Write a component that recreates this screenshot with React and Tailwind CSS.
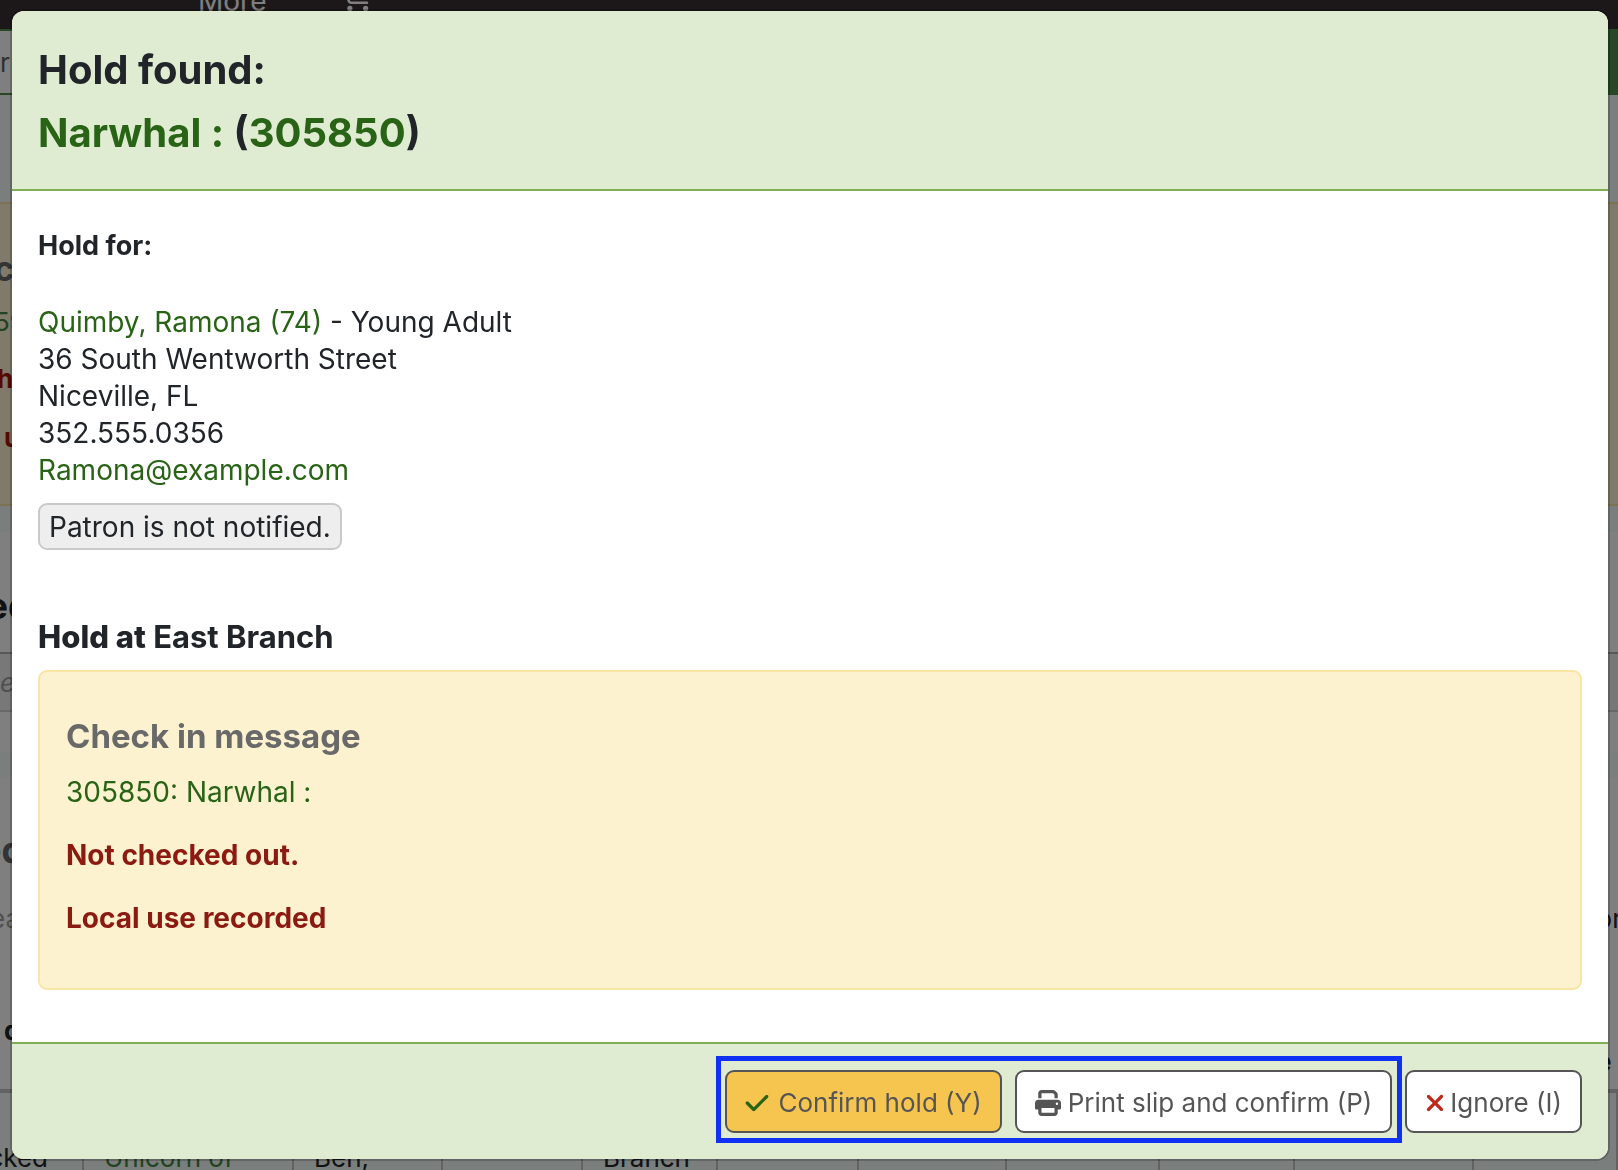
import { FaCartShopping, FaCheck, FaPrint, FaXmark } from 'react-icons/fa6'

const patron = {
  name: 'Quimby, Ramona (74)',
  category: 'Young Adult',
  lines: ['36 South Wentworth Street', 'Niceville, FL', '352.555.0356'],
  email: 'Ramona@example.com',
}

const columns = [
  { width: 83, head: 'd', cell: 'cked' },
  { width: 210, cell: 'Unicorn of', link: true },
  { width: 149, cell: 'Ben,' },
  { width: 140 },
  { width: 135, cell: 'Branch' },
  { width: 141 },
  { width: 148 },
  { width: 153 },
  { width: 135 },
  { width: 179 },
  { tail: 'e' },
]

// The check-in page that stays visible around the dialog
function CheckinPage() {
  return (
    <div className="flex h-screen flex-col overflow-hidden bg-[#f4fcf8] text-[26px] leading-[37px] text-[#202428]">
      <nav className="flex h-[29px] shrink-0 items-end overflow-hidden bg-[#383034] pl-[198px] text-white">
        <span className="w-[142px] pb-[14px] text-[28px] leading-[28px]">More</span>
        <FaCartShopping className="mb-[18px] h-[28px] w-[32px] shrink-0" />
      </nav>

      <div className="flex h-[66px] shrink-0 bg-[#528e4c]">
        <input
          aria-label="Check in barcode"
          defaultValue="r"
          className="w-3/4 border-y-2 border-[#528e4c] bg-white text-[#606060] outline-none"
        />
      </div>

      <div className="mt-[107px] h-[304px] shrink-0 border-y-2 border-[#fbe5a5] bg-[#fff4d2] pt-[45px]">
        <p className="-ml-[6px] text-[34px] font-bold leading-[40px] text-[#696969]">c</p>
        <p className="mt-[14px] -ml-[6px] text-[#418940]">59</p>
        <p className="mt-[20px] -ml-[3px] font-bold text-[#b01005]">h</p>
        <p className="mt-[22px] pl-[4px] font-bold text-[#b01005]">u</p>
      </div>

      <div className="mt-[26px] flex h-[220px] shrink-0 flex-col bg-white">
        <h2 className="-ml-[14px] h-[120px] pt-[52px] text-[37px] font-bold leading-[44px]">ed</h2>
        <div className="h-[60px] border-t-2 border-b-2 border-t-[#b0b0b0] border-b-[#d0d0d0] bg-[#f0f0f0] pt-[10px] italic text-[#a0a0a0]">
          e
        </div>
      </div>

      <div className="mt-[25px] grow bg-white pt-[48px]">
        <h2 className="-ml-[20px] text-[36px] font-bold leading-[50px] text-[#696969]">ed</h2>
        <div className="mt-[25px] flex justify-between leading-[37px]">
          <span className="-ml-[10px] text-[#a0a0a0]">ea</span>
          <span className="-mr-[4px]">or</span>
        </div>
        <table className="mt-[75px] w-full table-fixed border-collapse text-left">
          <colgroup>
            {columns.map((col, i) => (
              <col key={i} style={{ width: col.width }} />
            ))}
          </colgroup>
          <thead>
            <tr className="h-[79px] border-b-4 border-[#c4c4c4] align-top">
              {columns.map((col, i) => (
                <th key={i} className="pl-[4px]">
                  {col.head}
                  {col.tail && <span className="block pt-[31px] pl-[119px]">{col.tail}</span>}
                </th>
              ))}
            </tr>
          </thead>
          <tbody>
            <tr className="h-[120px] bg-[#f4fcf8] align-top">
              {columns.map((col, i) => (
                <td key={i} className="border-r-2 border-[#c4c4c4] pt-[46px] pl-[20px] first:pr-[34px] first:pl-0 first:[direction:rtl]">
                  {col.link ? <a href="#item" className="text-[#418940]">{col.cell}</a> : col.cell}
                </td>
              ))}
            </tr>
          </tbody>
        </table>
      </div>
    </div>
  )
}

function FooterButton({ icon, className, children }) {
  return (
    <button
      className={`flex h-[63px] items-center rounded-[9px] border-2 border-[#555] px-[18px] pt-[2px] text-[26px] leading-[38px] text-[#555] ${className}`}
    >
      {icon}
      {children}
    </button>
  )
}

function HoldDialog() {
  return (
    <div
      role="dialog"
      aria-modal="true"
      aria-labelledby="hold-title"
      className="mt-[9px] mr-[8px] ml-[10px] overflow-hidden rounded-[14px] border-2 border-black/20 bg-white bg-clip-padding text-[28px] leading-[37px] text-[#212529]"
    >
      <header className="border-b-2 border-[#7fae55] bg-[#dfecd2] px-[26px] pt-[27px] pb-[25px] text-[40px] font-bold leading-[63px]">
        <h1 id="hold-title">
          Hold found:
          <br />
          <a href="#record" className="text-[#286316]">Narwhal :</a> (
          <a href="#barcode" className="text-[#286316]">305850</a>)
        </h1>
      </header>

      <div className="px-[26px] pt-[36px] pb-[52px]">
        <h2 className="text-[27px] font-bold">Hold for:</h2>
        <ul className="mt-[40px]">
          <li>
            <a href="#patron" className="text-[#286316]">{patron.name}</a> - {patron.category}
          </li>
          {patron.lines.map((line) => (
            <li key={line}>{line}</li>
          ))}
          <li>
            <a href="#email" className="text-[#286316]">{patron.email}</a>
          </li>
        </ul>
        <span className="mt-[14px] inline-block rounded-[9px] border-2 border-[#c9c9c9] bg-[#eee] px-[9px] pt-[4px] pb-[2px]">
          Patron is not notified.
        </span>

        <h3 className="mt-[68px] text-[31px] font-bold">
          <strong className="font-extrabold">Hold at</strong> East Branch
        </h3>

        <div className="mt-[15px] rounded-[9px] border-2 border-[#fbe5a5] bg-[#fdf2d0] px-[26px] pt-[42px] pb-[51px]">
          <h3 className="text-[33px] font-bold leading-[44px] text-[#696969]">Check in message</h3>
          <p className="mt-[16px]">
            <a href="#record" className="text-[#286316]">305850: Narwhal :</a>
          </p>
          <p className="mt-[26px] font-bold text-[#8b1a10]">Not checked out.</p>
          <p className="mt-[26px] font-bold text-[#8b1a10]">Local use recorded</p>
        </div>
      </div>

      <footer className="flex justify-end gap-[13px] border-t-2 border-[#7fae55] bg-[#dfecd2] px-[26px] py-[26px]">
        <div className="relative flex gap-[13px]">
          <FooterButton className="bg-[#f5c54f]" icon={<FaCheck className="mr-[9px] h-[26px] w-[24px] text-[#286316]" />}>
            Confirm hold (Y)
          </FooterButton>
          <FooterButton className="bg-white" icon={<FaPrint className="mr-[7px] h-[26px] w-[26px]" />}>
            Print slip and confirm (P)
          </FooterButton>
          {/* Highlight around the confirm actions */}
          <div className="pointer-events-none absolute -top-[14px] -right-[10px] -bottom-[10px] -left-[9px] border-[5px] border-[#1030f5]" />
        </div>
        <FooterButton className="bg-white" icon={<FaXmark className="mr-[5px] h-[26px] w-[20px] text-[#c0281c]" />}>
          Ignore (I)
        </FooterButton>
      </footer>
    </div>
  )
}

export default function App() {
  return (
    <div className="font-[Inter,'Liberation_Sans',sans-serif]">
      <CheckinPage />
      <div className="fixed inset-0 overflow-hidden bg-black/50">
        <HoldDialog />
      </div>
    </div>
  )
}
